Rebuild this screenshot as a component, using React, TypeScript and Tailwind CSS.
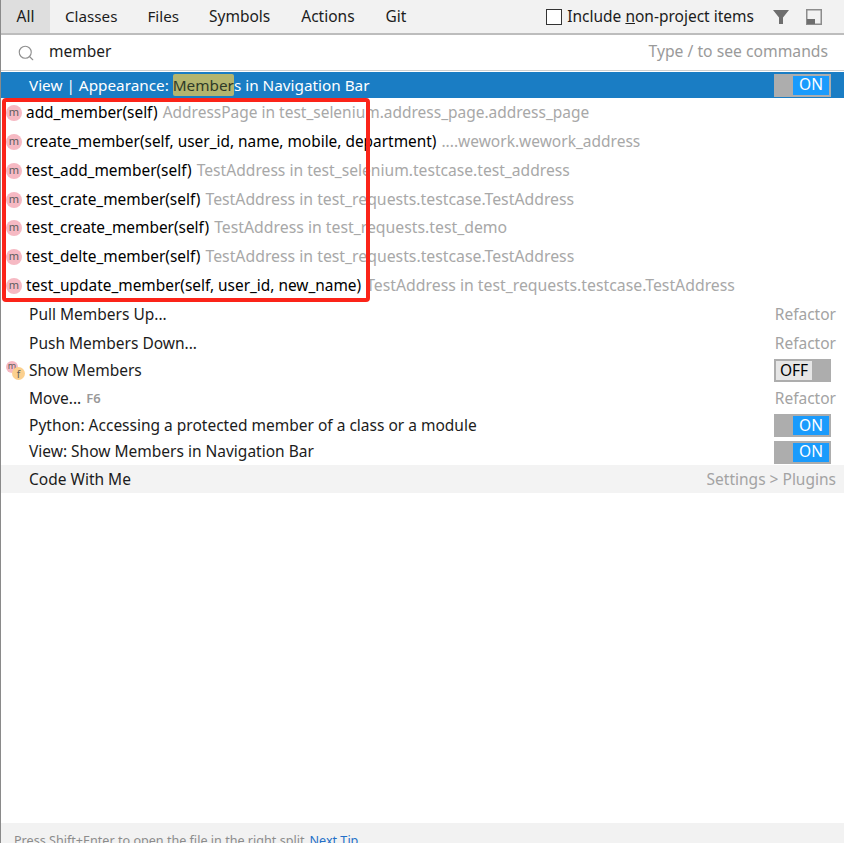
import { Search } from "lucide-react";

const font = "font-['Noto_Sans','Open_Sans',sans-serif]";

const members = [
  { name: "add_member(self)", hint: "AddressPage in test_selenium.address_page.address_page", h: "h-[29px]", size: "text-[15.47px]" },
  { name: "create_member(self, user_id, name, mobile, department)", hint: "....wework.wework_address", h: "h-[29px]", size: "text-[15.5px]" },
  { name: "test_add_member(self)", hint: "TestAddress in test_selenium.testcase.test_address", h: "h-[29px]", size: "text-[15.63px]" },
  { name: "test_crate_member(self)", hint: "TestAddress in test_requests.testcase.TestAddress", h: "h-[28px] pt-px", size: "text-[15.8px]" },
  { name: "test_create_member(self)", hint: "TestAddress in test_requests.test_demo", h: "h-[29px]", size: "text-[15.8px]" },
  { name: "test_delte_member(self)", hint: "TestAddress in test_requests.testcase.TestAddress", h: "h-[29px]", size: "text-[15.8px]" },
  { name: "test_update_member(self, user_id, new_name)", hint: "TestAddress in test_requests.testcase.TestAddress", h: "h-[29px]", size: "text-[15.8px]" },
];

function MemberIcon() {
  return (
    <span className="flex h-4 w-4 shrink-0 items-center justify-center rounded-full bg-[#f6b9c3] pb-[2px] text-[11px] leading-none text-[#5c5c5c]">
      m
    </span>
  );
}

function Toggle({ on }: { on: boolean }) {
  if (on) {
    return (
      <div className="flex h-[23px] w-[57px] border-2 border-[#adadad] bg-[#adadad]">
        <div className="flex-1" />
        <div className="flex w-9 items-center justify-center bg-[#1a9bfc] text-[15.5px] text-white">ON</div>
      </div>
    );
  }
  return (
    <div className="flex h-[23px] w-[57px] border-2 border-[#adadad] bg-[#adadad]">
      <div className="flex w-9 items-center justify-center bg-[#e6e6e6] text-[15.5px] text-black">OFF</div>
    </div>
  );
}

function ActionRow({ h, label, right, toggle, icon, extra }: { h: string; label: string; right?: string; toggle?: "on" | "off"; icon?: boolean; extra?: string }) {
  return (
    <div className={`relative flex items-center pl-[28px] pr-[8px] ${h}`}>
      {icon && (
        <div className="absolute left-[5px] top-[4px] h-[19px] w-[19px]">
          <span className="absolute left-0 top-0 flex h-3 w-3 items-start justify-center rounded-full bg-[#f6b9c3] text-[9px] leading-[9px] text-[#5c5c5c]">m</span>
          <span className="absolute bottom-0 right-0 flex h-[13px] w-[13px] items-center justify-center rounded-full bg-[#fbd08f] text-[10px] leading-none text-[#5c5c5c]">f</span>
        </div>
      )}
      <span className="text-[#1c1c1c]">{label}</span>
      {extra && <span className="ml-[5px] text-[13px] font-semibold text-[#999]">{extra}</span>}
      {right && <span className="ml-auto text-[#a3a3a3]">{right}</span>}
      {toggle && (
        <div className="ml-auto mr-[5px]">
          <Toggle on={toggle === "on"} />
        </div>
      )}
    </div>
  );
}

export default function App() {
  return (
    <div className={`${font} relative flex h-[843px] w-[844px] flex-col overflow-hidden border-l border-l-[#8a8a8a] bg-white text-[15.5px]`}>
      {/* tabs */}
      <div className="flex h-[35px] shrink-0 border-b-2 border-[#bdbdbd] bg-[#f2f2f2] text-[#1c1c1c]">
        <div className="flex w-[49px] items-center justify-center bg-[#dedede]">All</div>
        <div className="flex items-center gap-[30px] pl-[15px]">
          <span className="text-[15.2px]">Classes</span>
          <span className="text-[15.2px]">Files</span>
          <span>Symbols</span>
          <span className="ml-px">Actions</span>
          <span className="ml-px">Git</span>
        </div>
        <div className="ml-auto flex items-center pr-[22px]">
          <span className="mr-[5px] h-4 w-4 border border-[#333] bg-white" />
          <span>
            Include <span className="underline">n</span>on-project items
          </span>
          <svg viewBox="0 0 16 16" className="ml-[19px] h-4 w-4" fill="#6e6e6e">
            <path d="M0 1h16L10 8.5V15H6V8.5z" />
          </svg>
          <svg viewBox="0 0 16 16" className="ml-[17px] h-4 w-4">
            <rect x="0.75" y="0.75" width="14.5" height="14.5" fill="none" stroke="#8c8c8c" strokeWidth="1.5" />
            <rect x="1" y="10" width="8" height="5" fill="#6e6e6e" />
          </svg>
        </div>
      </div>

      {/* search */}
      <div className="flex h-[36px] shrink-0 items-center border-b border-[#cfcfcf] pl-[16px] pr-[16px]">
        <Search className="h-[18px] w-[18px] text-[#8f8f8f]" strokeWidth={1.5} />
        <span className="ml-[14px] pb-[2px] text-[#1c1c1c]">member</span>
        <span className="ml-auto pb-[2px] text-[15.7px] text-[#9a9a9a]">Type / to see commands</span>
      </div>

      {/* selected action */}
      <div className="mt-px flex h-[26px] shrink-0 items-center bg-[#1a7dc4] pl-[28px] pr-[13px] text-[15.3px] text-white">
        <span>View | Appearance:&nbsp;</span>
        <span className="rounded-[2px] bg-[#b4b56f] text-[#2f3a28]">Member</span>
        <span>s in Navigation Bar</span>
        <div className="ml-auto">
          <Toggle on />
        </div>
      </div>

      {/* symbols */}
      {members.map((m) => (
        <div key={m.name} className={`flex items-center whitespace-nowrap pl-[5px] ${m.h}`}>
          <MemberIcon />
          <span className="ml-[4px] text-[15.42px] text-black">{m.name}</span>
          <span className={`ml-[5px] text-[#a8a8a8] ${m.size}`}>{m.hint}</span>
        </div>
      ))}

      {/* actions */}
      <ActionRow h="h-[29px]" label="Pull Members Up..." right="Refactor" />
      <ActionRow h="h-[28px] pt-px" label="Push Members Down..." right="Refactor" />
      <ActionRow h="h-[27px]" label="Show Members" toggle="off" icon />
      <ActionRow h="h-[28px] pt-px" label="Move..." extra="F6" right="Refactor" />
      <ActionRow h="h-[27px]" label="Python: Accessing a protected member of a class or a module" toggle="on" />
      <ActionRow h="h-[26px]" label="View: Show Members in Navigation Bar" toggle="on" />
      <div className="flex h-[28px] shrink-0 items-center bg-[#f3f3f3] pl-[28px] pr-[8px] pt-px">
        <span className="text-[#1c1c1c]">Code With Me</span>
        <span className="ml-auto text-[#a3a3a3]">Settings &gt; Plugins</span>
      </div>

      {/* footer */}
      <div className="mt-auto flex h-5 shrink-0 items-start bg-[#f2f2f2] pl-[13px] pt-[9px] text-[12.6px] leading-[18px] text-[#8c8c8c]">
        <span>Press Shift+Enter to open the file in the right split</span>
        <span className="ml-[5px] text-[#2470c8]">Next Tip</span>
      </div>

      {/* red annotation drawn over the list */}
      <div className="pointer-events-none absolute left-[1px] top-[98px] h-[204px] w-[368px] rounded-[4px] border-4 border-[#fb2419]" />
    </div>
  );
}
